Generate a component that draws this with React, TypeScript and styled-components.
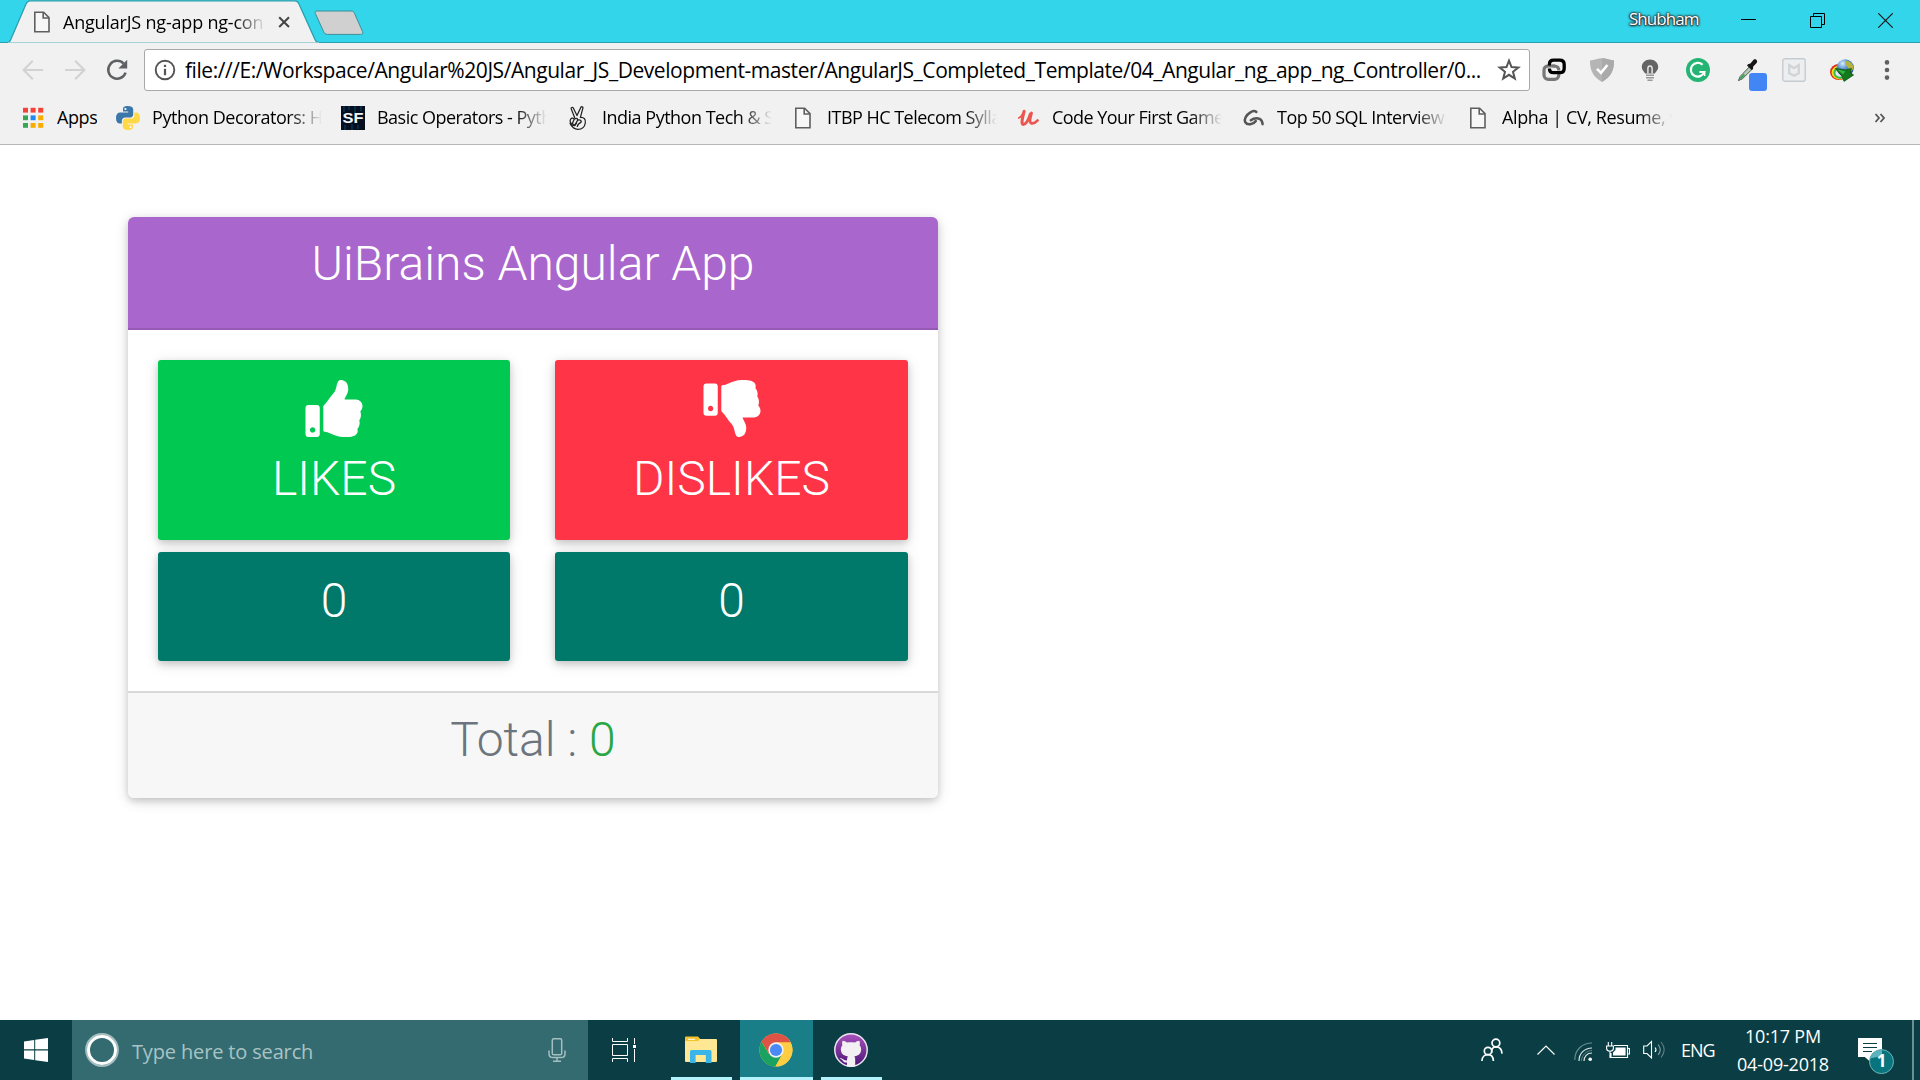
import React from "react";
import styled, { createGlobalStyle } from "styled-components";
import { FaThumbsUp, FaThumbsDown } from "react-icons/fa";

const GlobalStyle = createGlobalStyle`
  * { box-sizing: border-box; }
  html, body { margin: 0; padding: 0; background: #fff; overflow: hidden; }
  svg { display: block; flex: none; }
`;

const uiFont = `"Segoe UI", "Open Sans", "Noto Sans", sans-serif`;

const Screen = styled.div`
  width: 1920px;
  height: 1080px;
  display: flex;
  flex-direction: column;
  background: #fff;
  font-family: ${uiFont};
  color: #000;
`;

/* ---------- Title bar ---------- */
const TitleBar = styled.header`
  height: 43px;
  flex: none;
  display: flex;
  align-items: flex-start;
  background: #32d5e9;
  border-bottom: 1px solid #2a9fae;
`;

const Tab = styled.div`
  position: relative;
  width: 311px;
  height: 43px;
  margin-left: 8px;
  padding-left: 22px;
  display: flex;
  align-items: center;
`;

const TabShape = styled.svg`
  position: absolute;
  left: 0;
  top: 0;
`;

const TabContent = styled.div`
  position: relative;
  display: flex;
  align-items: center;
  height: 43px;
`;

const FadeText = styled.span<{ $w?: number; $size?: number; $ls?: number; $fade?: boolean }>`
  width: ${(p) => (p.$w ? `${p.$w}px` : "auto")};
  font-size: ${(p) => p.$size ?? 18}px;
  letter-spacing: ${(p) => p.$ls ?? 0}px;
  line-height: 28px;
  white-space: nowrap;
  overflow: hidden;
  flex: none;
  ${(p) => p.$fade && "mask-image: linear-gradient(to right, #000 calc(100% - 32px), transparent 100%);"}
`;

const TabTitle = styled(FadeText)`
  margin-left: 9px;
  margin-right: 11px;
`;

const NewTab = styled.svg`
  margin: 10px 0 0 -5px;
`;

const Caption = styled.div`
  margin-left: auto;
  display: flex;
  align-items: center;
  height: 40px;
  padding-right: 27px;
`;

const UserName = styled.span`
  width: 71px;
  margin-right: 41px;
  margin-top: -2px;
  font-size: 17px;
  letter-spacing: -0.95px;
  line-height: 24px;
  white-space: nowrap;
  color: #fff;
  text-shadow: 0 0 2px #222, 0 0 2px #222, 0 0 3px #333, 0 1px 2px #333;
`;

const CaptionButtons = styled.div`
  display: flex;
  gap: 53.5px;
`;

/* ---------- Toolbar ---------- */
const Toolbar = styled.div`
  height: 53px;
  flex: none;
  display: flex;
  align-items: center;
  padding: 1px 0 0 21px;
  background: #f1f1f1;
`;

const NavButtons = styled.div`
  display: flex;
  gap: 18px;
  margin-right: 15px;
`;

const AddressField = styled.div`
  width: 1386px;
  height: 42px;
  flex: none;
  display: flex;
  align-items: center;
  padding: 0 8px 0 9px;
  background: #fff;
  border: 1px solid #a8a8a8;
  border-radius: 3px;
`;

const UrlText = styled.span`
  flex: 1;
  margin-left: 9px;
  font-size: 21px;
  letter-spacing: -0.44px;
  line-height: 30px;
  white-space: nowrap;
`;

const Extensions = styled.div`
  display: flex;
  align-items: center;
  gap: 24px;
  margin-left: 12px;
`;

const MenuIcon = styled.svg`
  margin-left: 21px;
`;

const Bookmarks = styled.nav`
  height: 49px;
  flex: none;
  display: flex;
  align-items: center;
  gap: 19px;
  padding: 0 34px 5px 21px;
  background: #f1f1f1;
  border-bottom: 1px solid #b6b6b6;
`;

const Bookmark = styled.div`
  display: flex;
  align-items: center;
  gap: 12px;
  ${FadeText} {
    margin-top: -1px;
  }
`;

const Overflow = styled.svg`
  margin-left: auto;
`;

/* ---------- Page ---------- */
const Page = styled.main`
  flex: 1;
  padding: 72px 128px 0;
  background: #fff;
  font-family: Roboto, sans-serif;
  font-weight: 300;
  font-size: 48px;
`;

const Card = styled.section`
  width: 810px;
  height: 581px;
  display: flex;
  flex-direction: column;
  border-radius: 6px;
  overflow: hidden;
  box-shadow: 0 3px 7px rgba(0, 0, 0, 0.16), 0 3px 15px rgba(0, 0, 0, 0.12);
`;

const CardHeader = styled.div`
  height: 113px;
  padding-top: 18px;
  line-height: 58px;
  text-align: center;
  color: #fff;
  background: #a966cc;
  border-bottom: 2px solid #975bb6;
`;

const CardBody = styled.div`
  height: 361px;
  padding: 30px;
  display: grid;
  grid-template-columns: 352px 353px;
  grid-template-rows: 180px 109px;
  column-gap: 45px;
  row-gap: 12px;
`;

const Tile = styled.div<{ $bg: string }>`
  display: flex;
  flex-direction: column;
  align-items: center;
  padding-top: 20px;
  line-height: 58px;
  color: #fff;
  background: ${(p) => p.$bg};
  border-radius: 3px;
  box-shadow: 0 3px 7px rgba(0, 0, 0, 0.16), 0 3px 15px rgba(0, 0, 0, 0.12);
`;

const TileIcon = styled.div`
  width: 58px;
  height: 57px;
  svg {
    width: 58px;
    height: 57px;
  }
`;

const TileLabel = styled.span`
  margin-top: 13px;
`;

const CardFooter = styled.div`
  flex: 1;
  padding-top: 18px;
  line-height: 58px;
  text-align: center;
  color: #6c757d;
  background: #f7f7f7;
  border-top: 2px solid #d8d8d8;
`;

const TotalValue = styled.span`
  color: #28a745;
`;

/* ---------- Taskbar ---------- */
const Taskbar = styled.footer`
  height: 60px;
  flex: none;
  display: flex;
  align-items: stretch;
  background: #0a3e44;
  color: #fff;
`;

const StartButton = styled.div`
  width: 72px;
  display: flex;
  align-items: center;
  justify-content: center;
`;

const SearchBox = styled.div`
  width: 516px;
  display: flex;
  align-items: center;
  padding: 0 22px 0 13px;
  background: #336b70;
`;

const Placeholder = styled.span`
  flex: 1;
  margin: 3px 0 0 13px;
  font-size: 20px;
  letter-spacing: -0.15px;
  line-height: 30px;
  color: #a9c3c5;
`;

const TaskButton = styled.div<{ $open?: boolean; $active?: boolean; $ml?: number }>`
  width: 73px;
  margin-left: ${(p) => p.$ml ?? 2}px;
  display: flex;
  flex-direction: column;
  align-items: center;
  justify-content: center;
  background: ${(p) => (p.$active ? "#1a7e88" : "transparent")};
  &::after {
    content: "";
    width: ${(p) => (p.$active ? 73 : 61)}px;
    height: 3px;
    background: ${(p) => (p.$open ? "#b3f3fb" : "transparent")};
  }
`;

const TaskIcon = styled.div`
  height: 57px;
  display: flex;
  align-items: center;
  padding: 3px 1px 0 0;
`;

const Tray = styled.div`
  margin-left: auto;
  display: flex;
  align-items: center;
`;

const TrayItem = styled.div<{ $w: number; $ml?: number; $top?: number }>`
  width: ${(p) => p.$w}px;
  margin-left: ${(p) => p.$ml ?? 0}px;
  padding-top: ${(p) => p.$top ?? 0}px;
  flex: none;
`;

const Language = styled(TrayItem)`
  font-size: 18px;
  letter-spacing: -1px;
  line-height: 24px;
`;

const Clock = styled(TrayItem)`
  font-size: 18px;
  letter-spacing: -0.2px;
  line-height: 28px;
  text-align: center;
  white-space: nowrap;
`;

const ShowDesktop = styled.div`
  width: 8px;
  height: 60px;
  margin-left: 18px;
  border-left: 2px solid #6c9092;
`;

/* ---------- Icons ---------- */
const PageIcon = () => (
  <svg width="24" height="24" viewBox="0 0 24 24" fill="none" stroke="#5f5f5f" strokeWidth="1.6">
    <path d="M4.8 2.2H13.6L19 7.6V21.8H4.8Z" fill="#f7f7f7" />
    <path d="M13.2 2.2V8H19" />
  </svg>
);

const AppsIcon = () => {
  const colors = ["#f44336", "#f44336", "#f44336", "#34a853", "#1e88f5", "#f9ab00", "#34a853", "#f9ab00", "#f9ab00"];
  return (
    <svg width="24" height="24" viewBox="0 0 24 24">
      {colors.map((c, i) => (
        <rect key={i} x={2 + (i % 3) * 7.6} y={1.8 + Math.floor(i / 3) * 7.6} width="5" height="4.8" fill={c} />
      ))}
    </svg>
  );
};

const PythonIcon = () => (
  <svg width="24" height="24" viewBox="0 0 24 24">
    <path d="M11.8 0C7.6 0 7 1.8 7 3.2V5.6H12.2V6.6H4.2C1.6 6.6 0 8.6 0 12C0 15.6 1.6 17.6 3.8 17.6H5.8V14.8C5.8 12.8 7.4 11.4 9.2 11.4H14.4C16 11.4 17.2 10 17.2 8.4V3.4C17.2 1.4 15.4 0 11.8 0Z" fill="#3b77a9" />
    <path d="M12.2 24C16.4 24 17 22.2 17 20.8V18.4H11.8V17.4H19.8C22.4 17.4 24 15.4 24 12C24 8.4 22.4 6.4 20.2 6.4H18.4V9.2C18.4 11.2 16.8 12.6 15 12.6H9.8C8.2 12.6 6.8 14 6.8 15.6V20.6C6.8 22.6 8.6 24 12.2 24Z" fill="#ffd845" />
    <circle cx="9.4" cy="3" r="1.1" fill="#fff" />
    <circle cx="14.6" cy="21" r="1.1" fill="#fff" />
  </svg>
);

const SfIcon = () => (
  <svg width="24" height="24" viewBox="0 0 24 24">
    <rect width="24" height="24" fill="#04101f" />
    <path d="M3 0V6M8 0V4M14 0V7M20 0V5M4 19V24M11 18V24M17 19V23" stroke="#0b3350" strokeWidth="1.5" />
    <text x="12" y="17" textAnchor="middle" textLength="21" lengthAdjust="spacingAndGlyphs" fontFamily="Liberation Sans, sans-serif" fontWeight="700" fontSize="15" fill="#f2f4f6">SF</text>
  </svg>
);

const VictoryIcon = () => (
  <svg width="24" height="24" viewBox="0 0 24 24" fill="none" stroke="#222" strokeWidth="1.25" strokeLinecap="round" strokeLinejoin="round">
    <path d="M8.6 11.4L5.2 2.8C4.8 1.6 6.6.8 7.3 2L11 9.6L14.8 1.4C15.4.2 17.3.8 16.9 2.2L14.4 11.3" />
    <path d="M14.4 11.3C18.1 11 19.9 13.4 19.3 17C18.7 21 16.1 23.3 11.9 23.3C7.5 23.3 5.7 20.6 4.1 17.4" />
    <path d="M4.5 13.4C5.7 11.6 7.9 12 8.1 13.6L6.4 17.2C4.7 18 3.5 15.6 4.5 13.4ZM8.3 13.2C10.3 11.6 12.5 12.8 11.5 14.6L9.1 18.6C7.1 19.8 6.1 17.8 6.9 16.6" />
    <path d="M11.5 14.2C13.9 13.2 15.9 14.6 14.9 16.4C13.5 17.2 12.1 17 11.3 20.4M4.9 18.6L7.7 19.4M8.7 19.6L10.3 17.4" strokeWidth="1.4" />
  </svg>
);

const UdemyIcon = () => (
  <svg width="24" height="24" viewBox="0 0 24 24" fill="none" stroke="#ed5650" strokeLinecap="round" strokeLinejoin="round">
    <path d="M2.8 12C5 11 6.8 8.4 7.8 5.6" strokeWidth="1.8" />
    <path d="M8.2 5.2C7 10 4.6 18.2 7.2 18.4C9.8 18.6 12.4 14 14.4 8" strokeWidth="3" />
    <path d="M15.6 7C14.2 11.4 13 17 15.6 17.4C17.8 17.8 19.8 16.4 21.6 14.4" strokeWidth="2.7" />
  </svg>
);

const GIcon = () => (
  <svg width="24" height="24" viewBox="0 0 24 24" fill="none" stroke="#555" strokeLinecap="round" strokeLinejoin="round">
    <path d="M15.4 6C14.4 4.4 11.8 4.8 9.4 6.4C5.2 9 2.8 13.2 4.2 16.2C6 19.6 12.6 18.4 14.8 15" strokeWidth="2.5" />
    <path d="M9.8 14.2C12.6 12.2 16 11.8 18.6 12.8C20.6 13.8 21.4 15.6 21.6 18.2" strokeWidth="2.5" />
  </svg>
);

const BackIcon = ({ flip }: { flip?: boolean }) => (
  <svg width="24" height="24" viewBox="0 0 24 24" fill="none" stroke="#d2d2d2" strokeWidth="2.1">
    <path d={flip ? "M2 12H20.6M12.2 2.8L21.4 12L12.2 21.2" : "M22 12H3.4M11.8 2.8L2.6 12L11.8 21.2"} />
  </svg>
);

const ReloadIcon = () => (
  <svg width="24" height="24" viewBox="0 0 24 24">
    <path d="M18.6 5.6A8.9 8.9 0 1 0 20.6 14.6" fill="none" stroke="#5f6063" strokeWidth="2.5" />
    <path d="M22.2 1.8V10.4H13.4Z" fill="#5f6063" />
  </svg>
);

const InfoIcon = () => (
  <svg width="22" height="22" viewBox="0 0 22 22">
    <circle cx="11" cy="11" r="9.3" fill="none" stroke="#555" strokeWidth="1.9" />
    <rect x="9.9" y="9.8" width="2.2" height="6.4" fill="#555" />
    <rect x="9.9" y="5.8" width="2.2" height="2.2" fill="#555" />
  </svg>
);

const StarIcon = () => (
  <svg width="24" height="24" viewBox="0 0 24 24">
    <path d="M12 2.7L14.5 9.1L21.3 9.5L16 13.8L17.8 20.5L12 16.8L6.2 20.5L8 13.8L2.7 9.5L9.5 9.1Z" fill="none" stroke="#555" strokeWidth="2" />
  </svg>
);

const LinkIcon = () => (
  <svg width="24" height="24" viewBox="0 0 24 24" fill="none">
    <path d="M13 8H6.6C3.6 8 2 9.8 2 12.2V17C2 19.6 3.8 21.4 6.4 21.4H12.4C15 21.4 16.8 19.6 16.8 17V16" stroke="#77777a" strokeWidth="3.2" />
    <path d="M10.4 8H12C15.2 8 16.8 9.8 16.8 12.4" stroke="#77777a" strokeWidth="3.2" />
    <path d="M7.4 7.6V6.4C7.4 3.6 9 2.2 11.6 2.2H17.6C20.4 2.2 22.2 3.8 22.2 6.4V10.4C22.2 13 20.4 14.6 17.6 14.6H11.6C9 14.6 7.4 13 7.4 10.4" stroke="#000" strokeWidth="3.3" />
  </svg>
);

const ShieldIcon = () => (
  <svg width="24" height="24" viewBox="0 0 24 24">
    <path d="M0 2.4C4 2.4 8 .2 12 .2S20 2.4 24 2.4C24.2 12 21 19 12 24C3 19-.2 12 0 2.4Z" fill="#b5b5b5" />
    <path d="M12 .2C16 .2 20 2.4 24 2.4C24.2 12 21 19 12 24Z" fill="#aaa" />
    <path d="M7 10.8L11 14.8L17.4 7" fill="none" stroke="#fff" strokeWidth="2.6" />
  </svg>
);

const BulbIcon = () => (
  <svg width="24" height="24" viewBox="0 0 24 24">
    <path d="M12 1.6C7.4 1.6 3.8 5 3.8 9C3.8 12 5.8 13.4 7.2 15.4H16.8C18.2 13.4 20.2 12 20.2 9C20.2 5 16.6 1.6 12 1.6Z" fill="#656565" />
    <path d="M9.9 15.5V10.5C9.9 7 14.1 7 14.1 10.5V15.5" fill="none" stroke="#e5e5e5" strokeWidth="1.5" />
    <path d="M8 17.3H16M8 19.8H16M9.4 22.2H14.6" stroke="#999" strokeWidth="1.4" />
  </svg>
);

const GrammarlyIcon = () => (
  <svg width="24" height="24" viewBox="0 0 24 24">
    <circle cx="12" cy="12" r="12" fill="#24b574" />
    <path d="M16.6 6.8A6.9 6.9 0 1 0 18.2 14H13.4" fill="none" stroke="#fff" strokeWidth="2.2" />
    <path d="M16 13.8H18.6V18" fill="none" stroke="#fff" strokeWidth="1.6" />
  </svg>
);

const DropperIcon = () => (
  <svg width="24" height="24" viewBox="0 0 24 24" overflow="visible">
    <g transform="translate(3.4 0)">
      <path d="M12.6 8.2L2.8 18.4L1 22.6L5 20.8L15.4 10.6Z" fill="#b5c9b8" stroke="#4d5f50" strokeWidth="1" />
      <path d="M7 16.4L3 20.6" stroke="#36a553" strokeWidth="2" />
      <path d="M10.6 6.2L13 5.6L16.4 1.6C18 .2 21 2.4 19.2 5L15.8 8.6L15.6 11L14.2 12L9.6 7.4Z" fill="#161616" />
    </g>
    <rect x="15" y="15" width="18" height="18" rx="3" fill="#4285f4" />
  </svg>
);

const McAfeeIcon = () => (
  <svg width="24" height="24" viewBox="0 0 24 24" fill="none">
    <rect x=".8" y=".8" width="22.4" height="22.4" rx="2" fill="#eceeef" stroke="#c5ccd1" strokeWidth="1.4" />
    <path d="M7.2 7.2V15.2L12 17.6L16.8 15.2V7.2L12 10Z" stroke="#d1d5d8" strokeWidth="2.4" />
  </svg>
);

const IdmIcon = () => (
  <svg width="24" height="24" viewBox="0 0 24 24">
    <defs>
      <radialGradient id="globe" cx=".35" cy=".25" r=".8">
        <stop offset="0" stopColor="#d9edff" />
        <stop offset=".4" stopColor="#5b93d0" />
        <stop offset="1" stopColor="#174b94" />
      </radialGradient>
    </defs>
    <ellipse cx="9" cy="14" rx="9" ry="8" fill="#e22a1c" />
    <ellipse cx="9.6" cy="14.4" rx="8" ry="7" fill="#f8dc18" />
    <ellipse cx="10.2" cy="14.8" rx="6.8" ry="6" fill="#38b84a" />
    <ellipse cx="10" cy="15" rx="4.6" ry="3.8" fill="#dfe8f4" />
    <circle cx="15.2" cy="9.8" r="8.6" fill="url(#globe)" />
    <path d="M15 3.5C18 1.8 22.4 4.6 23.4 8.8C23.8 12 21 14.4 18.6 12.6C20 9.6 15.4 8.4 15 3.5Z" fill="#b5b43c" />
    <path d="M5.4 10.4L15.8 12L21.4 10.4L20.2 14.6L23.6 17L14 23.4L11.8 18Z" fill="#127a1a" stroke="#0a4a0f" strokeWidth=".7" />
    <path d="M7.4 11.6L15.4 13.2L13 16.4Z" fill="#37b53f" />
  </svg>
);

const WindowsLogo = () => (
  <svg width="24" height="24" viewBox="0 0 24 24" fill="#fff">
    <path d="M0 3.4L10.2 2V11.3H0ZM11.2 1.8L24 0V11.3H11.2ZM0 12.4H10.2V22L0 20.6ZM11.2 12.4H24V24L11.2 22.2Z" />
  </svg>
);

const CortanaIcon = () => (
  <svg width="34" height="34" viewBox="0 0 34 34" fill="none">
    <circle cx="17" cy="17" r="15.8" stroke="#a4bdbf" strokeWidth="2.2" />
    <circle cx="17" cy="17" r="13.5" stroke="#fff" strokeWidth="3" />
  </svg>
);

const MicIcon = () => (
  <svg width="18" height="24" viewBox="0 0 18 24" fill="none" stroke="#a5bfc1" strokeWidth="1.5">
    <rect x="4.3" y=".8" width="9.4" height="16" rx="1.4" />
    <path d="M1 12.5V15.5C1 18.2 2.4 19.6 5 19.6H13C15.6 19.6 17 18.2 17 15.5V12.5M9 19.6V23M5 23.2H13" />
  </svg>
);

const TaskViewIcon = () => (
  <svg width="24" height="24" viewBox="0 0 24 24" fill="none" stroke="#fff" strokeWidth="1">
    <path d="M.5 0V3.5H15.5V0M.5 6.5H15.5V17.5H.5ZM.5 24V20.5H15.5V24M22.5 0V6M22.5 11V24" />
    <rect x="21" y="7" width="3" height="3" fill="#fff" stroke="none" />
  </svg>
);

const ExplorerIcon = () => (
  <svg width="32" height="28" viewBox="0 0 32 28">
    <path d="M0 2Q0 1 1 1H13L15 3H31Q32 3 32 4V25Q32 26 31 26H1Q0 26 0 25Z" fill="#ffe793" />
    <path d="M0 1.6Q0 .6 1 .6H13L14.6 2.8L13.4 5H0Z" fill="#f6c428" />
    <path d="M3 3.3H10" stroke="#fff" strokeWidth="1" />
    <path d="M5 27V15.5Q5 14 6.5 14H25Q26.5 14 26.5 15.5V27H20.8V19H10.6V27Z" fill="#39b5ea" />
  </svg>
);

const ChromeIcon = () => (
  <svg width="34" height="34" viewBox="0 0 34 34">
    <circle cx="17" cy="17" r="16.6" fill="#ffcd42" />
    <path d="M2.6 8.7A16.6 16.6 0 0 1 31.6 9.4H17L9.8 20.6Z" fill="#df5246" />
    <path d="M2.6 8.7A16.6 16.6 0 0 0 16.4 33.6L23.4 21L17 17L9.6 20.6Z" fill="#1aa260" />
    <path d="M31.6 9.4A16.6 16.6 0 0 1 16.4 33.6L23.8 20.6L24.2 13.6L17 9.4Z" fill="#ffcd42" />
    <circle cx="17" cy="17" r="7.7" fill="#f1f1f1" />
    <circle cx="17" cy="17" r="6.1" fill="#4a8af4" />
  </svg>
);

const GithubIcon = () => (
  <svg width="36" height="36" viewBox="0 0 36 36">
    <defs>
      <linearGradient id="gh" x1="0" y1="0" x2="0" y2="1">
        <stop offset="0" stopColor="#a951bd" />
        <stop offset="1" stopColor="#4b1675" />
      </linearGradient>
    </defs>
    <circle cx="18" cy="18" r="16.2" fill="url(#gh)" stroke="#ebe5ee" strokeWidth="1.5" />
    <path d="M9.6 8.8C11.4 8.8 13 9.8 14 10.6C16.6 10 19.4 10 22 10.6C23 9.8 24.6 8.8 26.4 8.8C27 10.4 27 12 26.6 13.2C28 15 28.4 16.8 28 19C27.4 22.4 25 24 21.2 24.4C22 25.2 22.2 26 22.2 27.4V34.2Q18 35.2 14 34.2V30.4C9.8 31 10 27.4 6.6 26.2C9.6 25.4 10.4 29.2 14 28.4C14 26.6 14.2 25.2 15 24.4C11 24 8.6 22.2 8 19C7.6 16.8 8 15 9.4 13.2C9 12 9 10.4 9.6 8.8Z" fill="#f2f0f3" />
  </svg>
);

const PeopleIcon = () => (
  <svg width="22" height="24" viewBox="0 0 22 24" fill="none" stroke="#fff" strokeWidth="1.7">
    <circle cx="14.9" cy="5" r="3.9" />
    <path d="M11 14.8C9.8 11 12 8.9 14.9 8.9C18 8.9 20.8 11 21 15.6" />
    <circle cx="7" cy="13" r="3.7" />
    <path d="M.9 23C1 19 3.6 16.7 7 16.7C10.2 16.7 12.2 19 12.4 23" />
  </svg>
);

const WifiIcon = () => (
  <svg width="19" height="20" viewBox="0 0 19 20" fill="none" stroke="#dce6e7" strokeWidth="1.2">
    <path d="M.8 18C.8 8 8 1 18 1" stroke="#678b8f" />
    <path d="M5 19C5 11.5 10.5 6 18 6M10 19C10 14.5 13 11 18 11" />
    <path d="M7.3 19C8 13 12 8.8 18 8.5" stroke="#8ba6a8" strokeWidth=".6" />
    <circle cx="16.2" cy="17.2" r="1.8" fill="#fff" stroke="none" />
  </svg>
);

const BatteryIcon = () => (
  <svg width="24" height="17" viewBox="0 0 24 17" fill="none" stroke="#fff" strokeWidth="1.1">
    <path d="M8 3.5H21.5V15.5H5V11M21.5 6.5H23.5V12H21.5M2.3 0V4M5.7 0V4M.6 4H7.4V6.6Q7.2 9 4 9.2Q.8 9 .6 6.6ZM4 9.2V16" />
    <path d="M9.5 5.4H19.6V13.6H7V10.4L9.5 8Z" fill="#fff" stroke="none" />
  </svg>
);

const VolumeIcon = () => (
  <svg width="22" height="20" viewBox="0 0 22 20" fill="none" stroke="#fff" strokeWidth="1.1">
    <path d="M.7 6H4L8.5 1.5V18L4 13.5H.7Z" />
    <path d="M12 7.5Q14 9.7 12 12" />
    <path d="M15 4.5Q19.5 9.7 15 15" stroke="#849fa2" />
    <path d="M18 2Q24.4 9.7 18 17.5" stroke="#617f83" />
  </svg>
);

const ActionCenterIcon = () => (
  <svg width="36" height="36" viewBox="0 0 36 36">
    <path d="M0 0H24V19H12.5V24L6.8 19H0Z" fill="#fff" />
    <path d="M5 5.5H19M5 9.5H19M5 13.5H14" stroke="#0a3e44" strokeWidth="1" />
    <circle cx="23.5" cy="23.6" r="12" fill="#07747e" stroke="#6eb3b8" strokeWidth="1" />
    <path d="M12 20.5A12 12 0 0 1 24 11.8V17.5L19 19Z" fill="#5db3ba" />
    <text x="23.5" y="29.4" textAnchor="middle" fontFamily="Open Sans, sans-serif" fontWeight="700" fontSize="17" fill="#fff">1</text>
  </svg>
);

const bookmarks = [
  { Icon: PythonIcon, label: "Python Decorators: H", ls: -0.45 },
  { Icon: SfIcon, label: "Basic Operators - Pyth", ls: -0.52 },
  { Icon: VictoryIcon, label: "India Python Tech & S", ls: -0.5 },
  { Icon: PageIcon, label: "ITBP HC Telecom Sylla", ls: -0.52 },
  { Icon: UdemyIcon, label: "Code Your First Game", ls: -0.55 },
  { Icon: GIcon, label: "Top 50 SQL Interview", ls: -0.5 },
  { Icon: PageIcon, label: "Alpha | CV, Resume, v", ls: -0.4 },
];

export default function App() {
  return (
    <Screen>
      <GlobalStyle />
      <TitleBar>
        <Tab>
          <TabShape width="311" height="43" viewBox="0 0 311 43">
            <path d="M0 43V42.5C2 42.5 2 41 3 39L18 4C19 1.5 20 .8 22 .8H287C289 .8 290 1.5 291 4L307 39.5C308 42 309 42.5 311 42.5V43Z" fill="#f1f1f1" stroke="#2a9fae" strokeWidth="1.3" />
            <path d="M0 43H311" stroke="#f1f1f1" strokeWidth="1" />
          </TabShape>
          <TabContent>
            <PageIcon />
            <TabTitle $w={203} $fade $ls={-0.2} $size={18}>AngularJS ng-app ng-con</TabTitle>
            <svg width="14" height="14" viewBox="0 0 14 14">
              <path d="M2.2 2.2L12 12M12 2.2L2.2 12" stroke="#444" strokeWidth="2" />
            </svg>
          </TabContent>
        </Tab>
        <NewTab width="50" height="26" viewBox="0 0 50 26">
          <path d="M3 1H37C39 1 40 2 40.6 3.6L48.5 21.5C49.3 23.6 48.5 24.4 46.5 24.4H13.5C11.3 24.4 10.4 23.4 9.6 21.6L1.4 3.6C.7 2 1.3 1 3 1Z" fill="#d0d0d0" stroke="#3d8e98" strokeWidth="1" />
        </NewTab>
        <Caption>
          <UserName>Shubham</UserName>
          <CaptionButtons>
            <svg width="15" height="15" viewBox="0 0 15 15"><path d="M0 6.5H15" stroke="#000" /></svg>
            <svg width="15" height="15" viewBox="0 0 15 15" fill="none" stroke="#000"><path d="M.5 3.5H11.5V14.5H.5ZM3.5 3.5V.5H14.5V11.5H11.5" /></svg>
            <svg width="15" height="15" viewBox="0 0 15 15" fill="none" stroke="#111" strokeWidth="1.1"><path d="M.3.3L14.7 14.7M14.7.3L.3 14.7" /></svg>
          </CaptionButtons>
        </Caption>
      </TitleBar>

      <Toolbar>
        <NavButtons>
          <BackIcon />
          <BackIcon flip />
          <ReloadIcon />
        </NavButtons>
        <AddressField>
          <InfoIcon />
          <UrlText>file:///E:/Workspace/Angular%20JS/Angular_JS_Development-master/AngularJS_Completed_Template/04_Angular_ng_app_ng_Controller/0...</UrlText>
          <StarIcon />
        </AddressField>
        <Extensions>
          <LinkIcon />
          <ShieldIcon />
          <BulbIcon />
          <GrammarlyIcon />
          <DropperIcon />
          <McAfeeIcon />
          <IdmIcon />
        </Extensions>
        <MenuIcon width="24" height="24" viewBox="0 0 24 24" fill="#5f6063">
          <circle cx="12" cy="4.4" r="2.3" />
          <circle cx="12" cy="12" r="2.3" />
          <circle cx="12" cy="19.6" r="2.3" />
        </MenuIcon>
      </Toolbar>

      <Bookmarks>
        <Bookmark>
          <AppsIcon />
          <FadeText $w={40} $ls={-0.4}>Apps</FadeText>
        </Bookmark>
        {bookmarks.map(({ Icon, label, ls }) => (
          <Bookmark key={label}>
            <Icon />
            <FadeText $w={170} $ls={ls} $fade>{label}</FadeText>
          </Bookmark>
        ))}
        <Overflow width="12" height="12" viewBox="0 0 12 12" fill="none" stroke="#555" strokeWidth="1.8">
          <path d="M1.5 2L5 6L1.5 10M6.5 2L10 6L6.5 10" />
        </Overflow>
      </Bookmarks>

      <Page>
        <Card>
          <CardHeader>UiBrains Angular App</CardHeader>
          <CardBody>
            <Tile $bg="#00c851">
              <TileIcon><FaThumbsUp /></TileIcon>
              <TileLabel>LIKES</TileLabel>
            </Tile>
            <Tile $bg="#ff3547">
              <TileIcon><FaThumbsDown /></TileIcon>
              <TileLabel>DISLIKES</TileLabel>
            </Tile>
            <Tile $bg="#00796b">0</Tile>
            <Tile $bg="#00796b">0</Tile>
          </CardBody>
          <CardFooter>
            Total : <TotalValue>0</TotalValue>
          </CardFooter>
        </Card>
      </Page>

      <Taskbar>
        <StartButton><WindowsLogo /></StartButton>
        <SearchBox>
          <CortanaIcon />
          <Placeholder>Type here to search</Placeholder>
          <MicIcon />
        </SearchBox>
        <TaskButton $ml={0}><TaskIcon><TaskViewIcon /></TaskIcon></TaskButton>
        <TaskButton $ml={4} $open><TaskIcon><ExplorerIcon /></TaskIcon></TaskButton>
        <TaskButton $open $active><TaskIcon><ChromeIcon /></TaskIcon></TaskButton>
        <TaskButton $open><TaskIcon><GithubIcon /></TaskIcon></TaskButton>
        <Tray>
          <TrayItem $w={22}><PeopleIcon /></TrayItem>
          <TrayItem $w={18} $ml={34}>
            <svg width="18" height="12" viewBox="0 0 18 12"><path d="M.5 10.5L9 2L17.5 10.5" fill="none" stroke="#fff" strokeWidth="1.2" /></svg>
          </TrayItem>
          <TrayItem $w={18} $ml={19} $top={3}><WifiIcon /></TrayItem>
          <TrayItem $w={24} $ml={14}><BatteryIcon /></TrayItem>
          <TrayItem $w={22} $ml={13}><VolumeIcon /></TrayItem>
          <Language $w={34} $ml={16}>ENG</Language>
          <Clock $w={94} $ml={21}>
            <div>10:17 PM</div>
            <div>04-09-2018</div>
          </Clock>
          <TrayItem $w={36} $ml={28} $top={12}><ActionCenterIcon /></TrayItem>
          <ShowDesktop />
        </Tray>
      </Taskbar>
    </Screen>
  );
}
